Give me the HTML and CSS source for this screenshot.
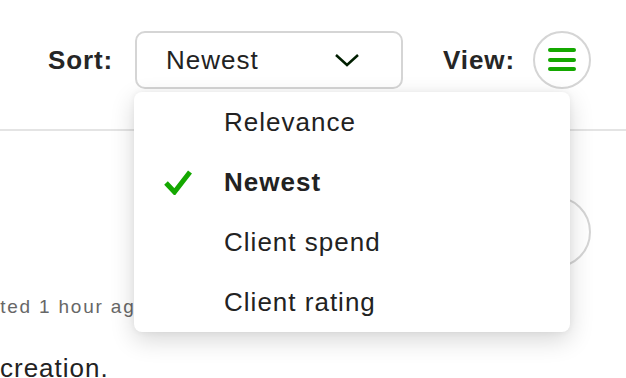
FILE: index.html
```html
<!DOCTYPE html>
<html lang="en">
<head>
  <meta charset="UTF-8" />
  <title>Jobs</title>
  <link rel="stylesheet" href="styles.css">
</head>
<body>
  <div class="toolbar">
    <div class="sort-group">
      <span class="label">Sort:</span>
      <div class="select">
        <span>Newest</span>
        <svg class="chevron" width="26" height="14" viewBox="0 0 26 14">
          <polyline points="2,2 13,12 24,2" fill="none" stroke="#001e00" stroke-width="2.5" />
        </svg>
      </div>

      <ul class="menu">
        <li class="menu-item"><span class="check-slot"></span>Relevance</li>
        <li class="menu-item selected">
          <span class="check-slot">
            <svg width="28" height="26" viewBox="0 0 28 26">
              <polyline points="2,14 10.5,23 26,3" fill="none" stroke="#14a800" stroke-width="5" />
            </svg>
          </span>Newest
        </li>
        <li class="menu-item"><span class="check-slot"></span>Client spend</li>
        <li class="menu-item"><span class="check-slot"></span>Client rating</li>
      </ul>
    </div>

    <div class="view-group">
      <span class="label">View:</span>
      <button class="round-btn">
        <svg width="28" height="24" viewBox="0 0 28 24">
          <rect x="0" y="0" width="28" height="4" rx="2" fill="#14a800" />
          <rect x="0" y="10" width="28" height="4" rx="2" fill="#14a800" />
          <rect x="0" y="19" width="28" height="4" rx="2" fill="#14a800" />
        </svg>
      </button>
    </div>
  </div>

  <div class="divider"></div>

  <div class="job">
    <div class="job-head">
      <button class="save-btn"></button>
    </div>
    <p class="job-meta">Posted 1 hour ago</p>
    <p class="job-desc">creation.</p>
  </div>
</body>
</html>
```

FILE: styles.css
```css
body {
  font-family: "Liberation Sans", Arial, sans-serif;
  color: #222;
  background-color: #fff;
  margin: 0;
  overflow: hidden;
}

.toolbar {
  display: flex;
  justify-content: flex-end;
  align-items: center;
  gap: 40px;
  padding: 31px 35px 0 0;
}

.sort-group, .view-group {
  display: flex;
  align-items: center;
}

.sort-group {
  gap: 22px;
  position: relative;
}

.view-group {
  gap: 18px;
}

.label {
  font-size: 26px;
  font-weight: 600;
  letter-spacing: 0.9px;
  color: #262626;
}

.select {
  width: 268px;
  height: 58px;
  box-sizing: border-box;
  border: 2px solid #d5d5d5;
  border-radius: 10px;
  display: flex;
  align-items: center;
  justify-content: space-between;
  padding: 0 41px 0 29px;
  font-size: 26px;
  letter-spacing: 1px;
}

.chevron {
  display: block;
}

.round-btn {
  width: 58px;
  height: 58px;
  border: 2px solid #d5d5d5;
  border-radius: 50%;
  background: #fff;
  padding: 0;
  display: flex;
  align-items: center;
  justify-content: center;
}

.menu {
  position: absolute;
  top: 61px;
  right: -167px;
  width: 436px;
  margin: 0;
  padding: 0;
  list-style: none;
  background: #fff;
  border-radius: 8px;
  box-shadow: 0 8px 24px rgba(0, 0, 0, 0.16), 0 0 6px rgba(0, 0, 0, 0.06);
  z-index: 2;
}

.menu-item {
  height: 60px;
  display: flex;
  align-items: center;
  padding-left: 30px;
  font-size: 26px;
  letter-spacing: 1px;
}

.menu-item.selected {
  font-weight: bold;
}

.check-slot {
  width: 60px;
  display: flex;
  align-items: center;
}

.divider {
  margin-top: 40px;
  border-top: 2px solid #e4e4e4;
}

.job-head {
  display: flex;
  justify-content: flex-end;
  padding: 65px 35px 0 0;
}

.save-btn {
  width: 72px;
  height: 72px;
  border: 2px solid #d5d5d5;
  border-radius: 50%;
  background: #fff;
}

.job-meta {
  margin: 27px 0 0 -38px;
  font-size: 19px;
  line-height: 24px;
  letter-spacing: 1.8px;
  color: #676767;
}

.job-desc {
  margin: 33px 0 0 0;
  font-size: 26px;
  line-height: 32px;
  letter-spacing: 1px;
}
```
